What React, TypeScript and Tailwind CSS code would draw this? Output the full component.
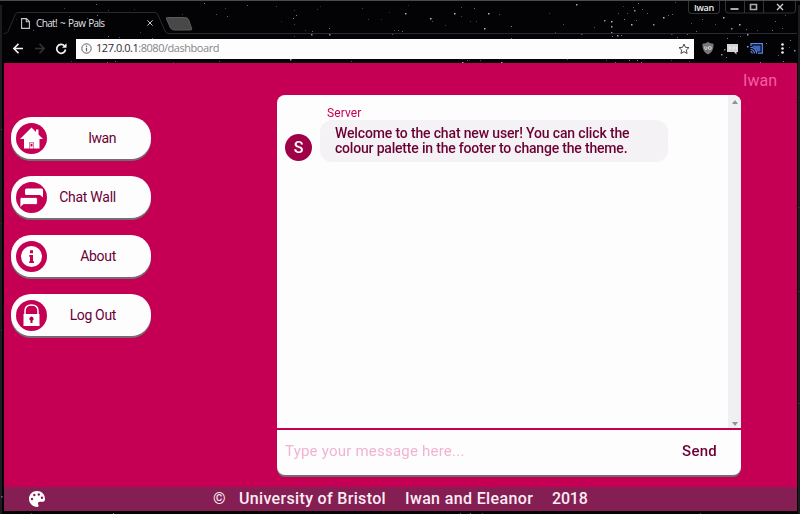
import React from "react";

const pageFont = "font-['Roboto','Liberation_Sans',sans-serif]";
const chromeFont = "font-['Open_Sans','Noto_Sans',sans-serif]";

// x, y, brightness
const stars: [number, number, number][] = [
  [96, 3, 5], [64, 7, 3], [108, 9, 3], [97, 14, 6], [134, 8, 2], [204, 2, 6], [225, 7, 3], [247, 4, 5], [182, 13, 3],
  [216, 13, 4], [227, 15, 5], [16, 18, 2], [40, 21, 3], [69, 15, 3], [87, 17, 4], [33, 29, 4], [74, 28, 3], [119, 36, 4],
  [140, 31, 3], [108, 35, 6], [152, 37, 5], [66, 44, 4], [57, 50, 3], [71, 60, 3], [107, 61, 5], [115, 60, 5], [173, 61, 3], [219, 60, 4],
  [294, 9, 3], [276, 5, 3], [296, 14, 6], [293, 17, 6], [294, 23, 3], [281, 20, 2], [317, 8, 3], [320, 5, 2], [288, 32, 6],
  [305, 29, 3], [312, 30, 5], [311, 33, 7], [329, 27, 6], [329, 33, 7], [294, 35, 3], [362, 7, 3], [368, 18, 3], [381, 18, 2],
  [389, 11, 2], [405, 12, 8], [430, 17, 9], [432, 20, 4], [394, 29, 4], [398, 29, 5], [402, 30, 5], [392, 33, 4], [454, 12, 9],
  [461, 6, 4], [461, 15, 3], [474, 7, 5], [488, 12, 9], [499, 13, 4], [484, 27, 9], [511, 25, 6], [511, 37, 5], [470, 20, 3],
  [476, 20, 3], [445, 24, 3], [408, 4, 2], [290, 58, 8], [351, 60, 4], [462, 61, 8], [467, 59, 5], [480, 59, 4], [501, 61, 8],
  [576, 3, 8], [549, 12, 3], [563, 23, 4], [555, 31, 3], [581, 32, 8], [599, 32, 5], [604, 19, 7], [611, 20, 9], [611, 25, 8],
  [611, 31, 7], [594, 26, 4], [617, 34, 8], [621, 34, 6], [631, 23, 9], [634, 9, 7], [627, 12, 4], [638, 2, 6], [633, 6, 5],
  [623, 5, 3], [642, 8, 5], [647, 12, 5], [618, 12, 4], [624, 18, 6], [636, 19, 5], [653, 23, 7], [663, 16, 9], [668, 14, 5],
  [672, 13, 5], [671, 32, 7], [677, 36, 5], [675, 1, 4], [691, 22, 4], [687, 33, 5], [696, 30, 5], [702, 18, 5], [709, 32, 5],
  [715, 23, 4], [723, 16, 9], [716, 12, 6], [731, 27, 7], [739, 23, 9], [746, 28, 5], [747, 33, 8], [740, 35, 5], [727, 37, 6],
  [757, 29, 4], [772, 29, 6], [775, 20, 5], [782, 27, 5], [785, 14, 4], [790, 39, 6], [796, 32, 4], [721, 53, 7], [726, 56, 6],
  [724, 48, 7], [747, 45, 8], [766, 42, 6], [778, 54, 5], [789, 46, 4], [794, 49, 7], [783, 60, 6], [629, 59, 6],
  [637, 59, 6], [615, 61, 5], [641, 61, 6], [567, 58, 4], [606, 59, 4], [689, 60, 3], [671, 59, 3], [760, 61, 6], [612, 35, 6],
  [1, 128, 5], [1, 222, 3], [1, 329, 4], [1, 495, 7], [56, 513, 8], [113, 512, 6], [31, 512, 3], [200, 513, 3],
  [798, 96, 3], [798, 206, 4], [798, 290, 4], [798, 402, 5], [460, 512, 4], [470, 512, 5], [482, 512, 3], [655, 513, 3], [700, 512, 3],
];

function Starfield() {
  return (
    <svg className="absolute inset-0" width="800" height="514" aria-hidden="true">
      {stars.map(([x, y, b], i) => (
        <rect key={i} x={x} y={y} width={b > 6 ? 1.5 : 1} height={b > 6 ? 1.5 : 1} fill="#c9cbe8" opacity={b / 10} />
      ))}
      <path d="M1 4v510M799 4v510" stroke="#34363a" strokeWidth="2" strokeOpacity=".5" />
    </svg>
  );
}

function TabStrip() {
  return (
    <div className="flex h-[34px] items-start justify-between">
      <div className="relative mt-[12px] flex h-[22px] w-[200px] items-center pl-[17px]">
        <svg className="absolute left-0 top-0" width="793" height="22" fill="none" stroke="#2b2b2f">
          <path d="M0 21.500q3 0 4-2L11 3q1-2.500 3-2.500H151q2 0 3 2.500l7 16q1 2.500 4 2.500H793" />
          <path d="M162.500 7q-1-1.500 1-1.500h17q3 0 4 2l3 8.500q1 2-1 2h-16q-3 0-4-2z" fill="#484848" stroke="#5b5b5b" />
        </svg>
        <svg className="relative" width="9" height="11" viewBox="0 0 9 11" fill="none" stroke="#c8c8c8" strokeWidth="1.1">
          <path d="M.6.6h4.800l3 3v6.800H.6zM5.300.6v3.200h3.100" />
        </svg>
        <span className={`relative ml-[6px] w-[111px] whitespace-nowrap text-[10px] tracking-[-0.65px] text-[#e2e2e2] [word-spacing:1px] ${chromeFont}`}>
          Chat! ~ Paw Pals
        </span>
        <svg className="relative" width="6" height="6" stroke="#c8c8c8" strokeWidth="1">
          <path d="M.4.4l5.200 5.200M5.600.4L.4 5.600" />
        </svg>
      </div>
      <div className="relative flex h-[14px]">
        <div className={`mr-[4px] flex w-[32px] items-center justify-center rounded-b border border-t-0 border-[#333] pt-[2px] text-[9px] font-semibold tracking-[-0.3px] text-[#eee] ${chromeFont}`}>
          Iwan
        </div>
        <svg width="73" height="14" fill="none" stroke="#333">
          <path d="M1.500 0v10q0 3 3 3h64q3 0 3-3V0M20.500 0v13M39.500 0v13" />
          <path d="M6.500 9h8" stroke="#aaa" strokeWidth="2" />
          <path d="M26.500 4.500h6v5h-6z" stroke="#aaa" strokeWidth="1.600" />
          <path d="M53 4l6 6m0-6l-6 6" stroke="#ccc" strokeWidth="1.400" />
        </svg>
      </div>
    </div>
  );
}

function Toolbar() {
  return (
    <div className="flex h-[29px] items-center pl-[7px] pr-[13px]">
      <svg width="60" height="16" viewBox="0 0 60 16" fill="none" stroke="#f4f4f4" strokeWidth="1.500">
        <path d="M12 7.500H3m4.500-4.600L2.800 7.500l4.700 4.600" />
        <path d="M24 7.500h9m-4.500-4.600L33.200 7.500l-4.700 4.600" stroke="#333" />
        <path d="M53.500 5A4.400 4.400 0 1 0 54.500 8.500" strokeWidth="1.700" />
        <path d="M55.500 2.300v4.500H51z" fill="#f4f4f4" stroke="none" />
      </svg>
      <div className="ml-[5px] flex h-[20px] w-[618px] items-center bg-[#fefdfe] pl-[5px] pr-[4px]">
        <svg width="11" height="11" viewBox="0 0 11 11" fill="none" stroke="#5e5e5e">
          <circle cx="5.500" cy="5.500" r="4.700" />
          <path d="M5.500 4.800v3.400M5.500 2.600v1.200" strokeWidth="1.200" />
        </svg>
        <span className={`ml-[4px] flex-1 text-[11px] tracking-[-0.46px] text-[#858585] ${chromeFont}`}>
          <span className="text-[#2f2f2f]">127.0.0.1</span>:8080/dashboard
        </span>
        <svg width="12" height="12" viewBox="0 0 12 12" fill="none" stroke="#4b4b4b" strokeWidth="1">
          <path d="M6 1l1.400 3.300 3.600.3-2.700 2.400.8 3.500L6 8.700l-3.100 1.800.8-3.500L1 4.600l3.600-.3z" />
        </svg>
      </div>
      <div className="ml-[8px] flex flex-1 items-center justify-between">
        <svg width="12" height="13" viewBox="0 0 12 13">
          <path d="M6 0q2.500 1.600 5.500 1.700Q12.200 9.500 6 12.500-.2 9.500.5 1.700 3.500 1.600 6 0z" fill="#777" />
          <path d="M2.800 4.500v2q0 1 1 1t1-1v-2M6.300 6q0-1.500 1.500-1.500T9.300 6 7.800 7.500 6.300 6z" fill="none" stroke="#e5e5e5" strokeWidth=".9" />
        </svg>
        <svg width="13" height="12" viewBox="0 0 13 12">
          <path d="M1 1h11v8h-1.500v2.500L8 9H1z" fill="#d4d4d4" />
          <path d="M2.500 4h2v2h-2m4 0h1.500V4H6.500m3 0h1v2" fill="none" stroke="#f4f4f4" strokeWidth=".8" />
        </svg>
        <svg width="13" height="11" viewBox="0 0 13 11" fill="none" stroke="#6389e5" strokeWidth="1.200">
          <path d="M1 3V.7h11.300v9.500H8" />
          <path d="M2.500 2.500h8v6H7.200Q6 4.500 2.500 4z" fill="#3865cb" stroke="none" />
          <path d="M.5 8.700q1.600 0 1.800 1.800M.5 6.500q3.600 0 4 4M.5 4.300q5.800 0 6.200 6.200" />
        </svg>
        <svg className="ml-[6px]" width="3" height="11" fill="#f1f1f1">
          <circle cx="1.500" cy="1.500" r="1.300" />
          <circle cx="1.500" cy="5.500" r="1.300" />
          <circle cx="1.500" cy="9.500" r="1.300" />
        </svg>
      </div>
    </div>
  );
}

const icons = {
  home: (
    <>
      <path d="M15.500 4.500l4.500 4.500V6.500h2.500v5L27 16h-3.500v9.500H18v-6h-5v6H8V16H4z" fill="#fff" />
      <path d="M13.500 20.200h4v5.300h-4z" fill="#fff" />
      <path d="M14.500 21h2v2.500h-2z" fill="#c50054" />
    </>
  ),
  chat: (
    <>
      <path d="M10.500 6.500h15q1.500 0 1.500 1.500v7.500L24 13H10.500Q9 13 9 11.500V8q0-1.500 1.500-1.500z" fill="#fff" />
      <path d="M5.500 15.500h14q2 0 2 1.500v4q0 1.500-2 1.500H7.500L4 25.500V17q0-1.500 1.500-1.500z" fill="#fff" stroke="#c50054" strokeWidth=".8" />
    </>
  ),
  info: (
    <>
      <circle cx="15.500" cy="15.500" r="10.500" fill="#fff" />
      <path d="M14 9.300h3v3h-3zM13.300 14H17v6.200h1V22h-4.800v-1.800H14v-4.500h-.7z" fill="#c50054" />
    </>
  ),
  lock: (
    <>
      <path d="M9 14v-3q0-6 6.500-6t6.500 6v3" fill="none" stroke="#fff" strokeWidth="1.500" />
      <path d="M7.500 14h16v12h-16z" fill="#fff" />
      <path d="M14.500 20.500a2 2 0 1 1 2 0v2.500h-2z" fill="#b0004b" />
    </>
  ),
};

function NavButton({ icon, label, spacing }: { icon: keyof typeof icons; label: string; spacing: string }) {
  return (
    <button className="flex h-[42px] w-[140px] items-center rounded-[20px] bg-[#fefdfe] pl-[5px] pr-[35px] shadow-[0_2px_0_#766b70]">
      <svg width="31" height="31" viewBox="0 0 31 31">
        <circle cx="15.500" cy="15.500" r="15.500" fill="#c50054" />
        {icons[icon]}
      </svg>
      <span className={`flex-1 whitespace-nowrap text-right text-[14px] text-[#6b0035] ${spacing}`}>{label}</span>
    </button>
  );
}

function ChatPanel() {
  return (
    <section className="mt-[32px] flex h-[380px] w-[464px] flex-col overflow-hidden rounded-[8px] bg-[#fefdfe]">
      <div className="flex h-[333px]">
        <div className="flex-1 pl-[8px] pt-[11px]">
          <div className="pl-[42px] text-[12px] leading-[14px] tracking-[0.1px] text-[#c50054]">Server</div>
          <div className="flex">
            <div className="mt-[14px] flex h-[27px] w-[27px] items-center justify-center rounded-full bg-[#a00047] text-[16px] font-medium text-white">S</div>
            <div className="ml-[8px] h-[42px] w-[348px] whitespace-nowrap rounded-[12px] bg-[#f4f2f4] pl-[15px] pt-[6px] text-[14px] font-medium leading-[15px] text-[#6b0035]">
              <div className="tracking-[-0.15px]">Welcome to the chat new user! You can click the</div>
              <div className="tracking-[-0.19px]">colour palette in the footer to change the theme.</div>
            </div>
          </div>
        </div>
        <div className="flex w-[13px] flex-col items-center justify-between bg-[#f0eff1] pb-[2px] pt-[5px]">
          <svg width="6" height="4" fill="#929092"><path d="M3 0l3 4H0z" /></svg>
          <svg width="6" height="4" fill="#929092"><path d="M3 4L0 0h6z" /></svg>
        </div>
      </div>
      <div className="flex h-[47px] items-center justify-between border-t-2 border-[#c50054] pb-[2px] pl-[8px] pr-[24px]">
        <span className="text-[15px] tracking-[0.22px] text-[#f0b3d1]">Type your message here...</span>
        <button className="text-[15px] font-medium tracking-[0.25px] text-[#6b0035]">Send</button>
      </div>
    </section>
  );
}

export default function App() {
  return (
    <div className="relative h-[514px] w-[800px] overflow-hidden border-t border-[#4a4b4c] bg-[#030305]">
      <Starfield />
      <div className="relative ml-[4px] mr-[3px] -mt-px flex flex-col">
        <TabStrip />
        <Toolbar />
        <div className={`flex h-[448px] w-[793px] flex-col bg-[#c50054] ${pageFont}`}>
          <main className="flex h-[424px]">
            <nav className="ml-[7px] flex w-[266px] flex-col gap-[17px] pt-[54px]">
              <NavButton icon="home" label="Iwan" spacing="tracking-[-0.45px]" />
              <NavButton icon="chat" label="Chat Wall" spacing="tracking-[-0.25px]" />
              <NavButton icon="info" label="About" spacing="tracking-[-0.3px]" />
              <NavButton icon="lock" label="Log Out" spacing="tracking-[-0.35px]" />
            </nav>
            <div className="h-[414px] drop-shadow-[0_2px_0_#766b70]"><ChatPanel /></div>
            <div className="mr-[20px] flex-1 pt-[9px] text-right text-[16px] leading-[18px] text-[#f25fa3]">Iwan</div>
          </main>
          <footer className="flex h-[24px] items-center bg-[#851e53] pb-px pl-[25px] text-[16px] font-medium text-[#fcecf4]">
            <svg width="16" height="16" viewBox="0 0 16 16">
              <path d="M8 0C3.500 0 0 3.300 0 7.800 0 12.400 3.600 16 8.200 16c1.400 0 1.800-1.200 1.100-2.300-.8-1.300-.2-2.900 1.600-2.900h2.600c1.500 0 2.500-1.200 2.500-2.900C16 3.200 12.500 0 8 0z" fill="#fff" />
              <g fill="#851e53"><circle cx="3" cy="8" r="1.200" /><circle cx="5.300" cy="4" r="1.200" /><circle cx="9.800" cy="3.500" r="1.200" /><circle cx="13" cy="6.800" r="1.200" /></g>
            </svg>
            <span className="ml-[168px] w-[26px] font-normal">©</span>
            <span className="w-[166px] whitespace-nowrap tracking-[0.33px]">University of Bristol</span>
            <span className="w-[147px] whitespace-nowrap tracking-[0.36px]">Iwan and Eleanor</span>
            <span className="tracking-[-0.2px]">2018</span>
          </footer>
        </div>
      </div>
    </div>
  );
}
